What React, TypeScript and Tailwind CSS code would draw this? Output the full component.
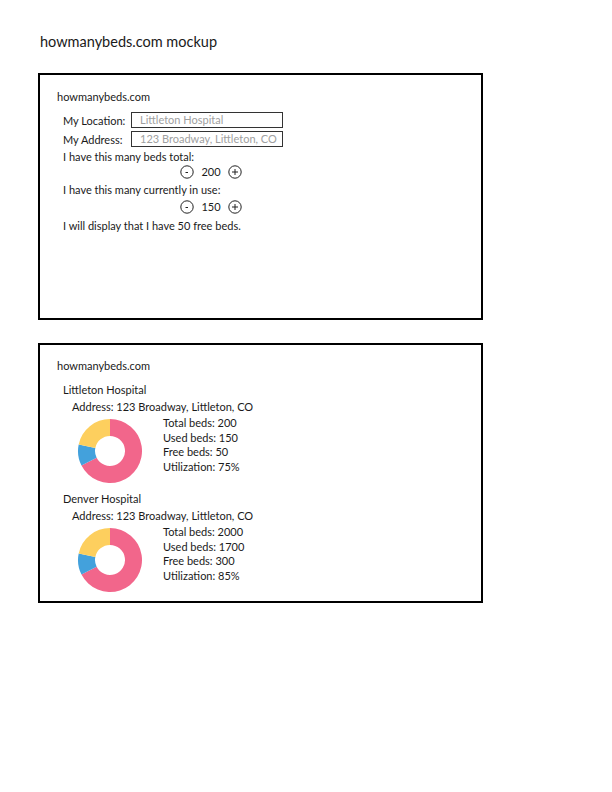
import React from 'react';

const font = { fontFamily: '"Lato", "Open Sans", sans-serif' };

// annulus sector between two angles (degrees, clockwise from 12 o'clock)
const sector = (cx: number, cy: number, ro: number, ri: number, a0: number, a1: number) => {
  const pt = (r: number, a: number) => {
    const rad = ((a - 90) * Math.PI) / 180;
    return `${cx + r * Math.cos(rad)} ${cy + r * Math.sin(rad)}`;
  };
  const large = a1 - a0 > 180 ? 1 : 0;
  return `M ${pt(ro, a0)} A ${ro} ${ro} 0 ${large} 1 ${pt(ro, a1)} L ${pt(ri, a1)} A ${ri} ${ri} 0 ${large} 0 ${pt(ri, a0)} Z`;
};

const Donut: React.FC<{ segments: { pct: number; color: string }[] }> = ({ segments }) => {
  let start = 0;
  return (
    <svg width="66" height="66" viewBox="0 0 66 66" className="shrink-0">
      {segments.map((s, i) => {
        const end = start + s.pct * 3.6;
        const d = sector(33, 33, 32, 15, start, end);
        start = end;
        return <path key={i} d={d} fill={s.color} />;
      })}
    </svg>
  );
};

const StepButton: React.FC<{ sign: '-' | '+' }> = ({ sign }) => (
  <svg width="14" height="14" viewBox="0 0 14 14">
    <circle cx="7" cy="7" r="6.2" fill="none" stroke="#222" strokeWidth="1" />
    {sign === '-' ? (
      <line x1="5.5" y1="7.5" x2="8" y2="7.5" stroke="#222" strokeWidth="1" />
    ) : (
      <>
        <line x1="4" y1="7" x2="10" y2="7" stroke="#222" strokeWidth="1" />
        <line x1="7" y1="4" x2="7" y2="10" stroke="#222" strokeWidth="1" />
      </>
    )}
  </svg>
);

const Stepper: React.FC<{ value: number }> = ({ value }) => (
  <div className="flex items-center h-[15px] pl-[117px] gap-[7px]">
    <StepButton sign="-" />
    <span className="w-[20px] text-center">{value}</span>
    <StepButton sign="+" />
  </div>
);

const hospitals = [
  { name: 'Littleton Hospital', total: 200, used: 150, free: 50, util: 75 },
  { name: 'Denver Hospital', total: 2000, used: 1700, free: 300, util: 85 },
];

const segs = [
  { pct: 67.5, color: '#f2668b' },
  { pct: 10.8, color: '#43a1dc' },
  { pct: 21.7, color: '#fdcf5e' },
];

export default function App() {
  return (
    <div className="w-[612px] h-[792px] bg-white text-[#1a1a1a] text-[11px] leading-[15px]" style={font}>
      <div className="pt-[33px] pl-[40px] text-[14.5px] leading-[17px]">howmanybeds.com mockup</div>

      <div className="ml-[38px] mt-[23px] w-[445px] h-[247px] border-2 border-black pl-[17px] pt-[14px]">
        <div>howmanybeds.com</div>
        <div className="pl-[6px] mt-[8px]">
          <div className="flex items-center h-[16px]">
            <span className="w-[68px]">My Location:</span>
            <div className="w-[152px] h-[16px] border border-[#333] pl-[8px] text-[#a0a0a0] leading-[14px]">Littleton Hospital</div>
          </div>
          <div className="flex items-center h-[16px] mt-[3px]">
            <span className="w-[68px]">My Address:</span>
            <div className="w-[152px] h-[16px] border border-[#333] pl-[8px] text-[#a0a0a0] leading-[14px]">123 Broadway, Littleton, CO</div>
          </div>
          <div className="mt-[2px]">I have this many beds total:</div>
          <Stepper value={200} />
          <div className="mt-[3px]">I have this many currently in use:</div>
          <div className="mt-[2px]">
            <Stepper value={150} />
          </div>
          <div className="mt-[4px]">I will display that I have 50 free beds.</div>
        </div>
      </div>

      <div className="ml-[38px] mt-[23px] w-[445px] h-[260px] border-2 border-black pl-[17px] pt-[13px]">
        <div>howmanybeds.com</div>
        <div className="pl-[6px] mt-[9px] flex flex-col gap-[7px]">
          {hospitals.map((h) => (
            <div key={h.name}>
              <div>{h.name}</div>
              <div className="pl-[9px] mt-[2px]">Address: 123 Broadway, Littleton, CO</div>
              <div className="flex mt-[2px]">
                <div className="pl-[14px] pt-[2px] w-[100px]">
                  <Donut segments={segs} />
                </div>
                <div className="leading-[14.5px]">
                  <div>Total beds: {h.total}</div>
                  <div>Used beds: {h.used}</div>
                  <div>Free beds: {h.free}</div>
                  <div>Utilization: {h.util}%</div>
                </div>
              </div>
            </div>
          ))}
        </div>
      </div>
    </div>
  );
}
